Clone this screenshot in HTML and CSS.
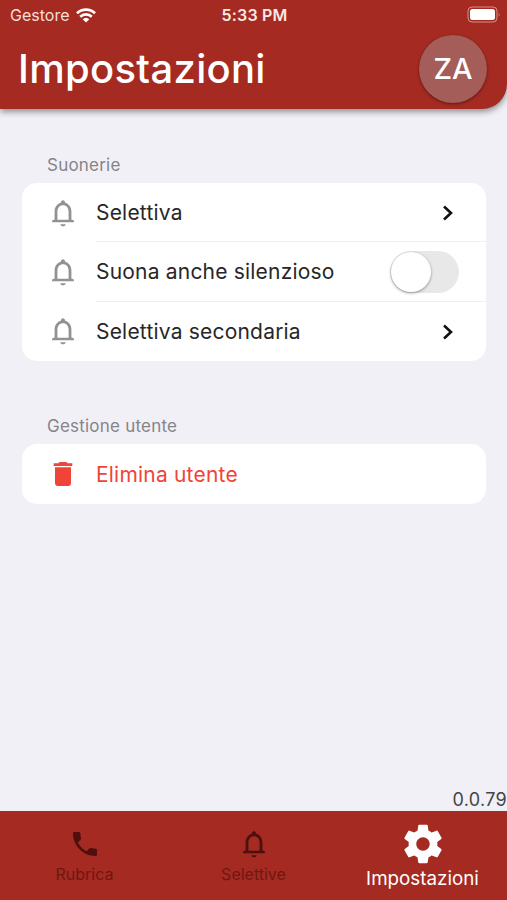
FILE: index.html
```html
<!DOCTYPE html>
<html lang="it">
<head>
<meta charset="utf-8">
<title>Impostazioni</title>
<link rel="stylesheet" href="styles.css">
</head>
<body>
<svg class="defs" width="0" height="0">
  <symbol id="bell" viewBox="0 0 24 24"><path d="M12 22c1.1 0 2-.7 2-1.6h-4c0 .9.9 1.6 2 1.6zm6.3-5.2V11c0-3.3-1.7-5.7-4.6-6.6C13.5 3.2 12.9 2.5 12 2.5s-1.5.7-1.7 1.9C7.4 5.3 5.7 7.7 5.7 11v5.8L3.8 17.7v1.3h16.4v-1.3l-1.9-.9zm-2.1.3H7.8V11c0-2.9 1.7-4.9 4.2-4.9s4.2 2 4.2 4.9v6.1z"/></symbol>
</svg>
<div class="app">
  <header class="header">
    <div class="status">
      <div class="carrier"><span>Gestore</span>
        <svg class="wifi" viewBox="0 0 20 15"><path d="M1 5.3a13 13 0 0 1 18 0M4.2 8.7a8.3 8.3 0 0 1 11.6 0" fill="none" stroke="currentColor" stroke-width="2.7"/><path d="M10 14.6 6.7 11.3a4.8 4.8 0 0 1 6.6 0z" fill="currentColor"/></svg>
      </div>
      <span class="time">5:33 PM</span>
      <svg class="battery" viewBox="0 0 34 18"><rect x="1" y="1" width="29" height="15" rx="4" fill="none" stroke="#d98f87"/><rect x="3" y="3" width="25" height="11" rx="2.5" fill="#fff"/><path d="M31.7 6.5q1.5 2 0 4z" fill="#d98f87"/></svg>
    </div>
    <div class="titlebar"><h1>Impostazioni</h1><div class="avatar">ZA</div></div>
  </header>
  <main class="main">
    <h2>Suonerie</h2>
    <section class="card">
      <div class="row"><svg class="icon"><use href="#bell"/></svg><div class="cell"><span>Selettiva</span><svg class="chevron" viewBox="0 0 12 18"><path d="m2 2.5 7 6.5-7 6.5"/></svg></div></div>
      <div class="row"><svg class="icon"><use href="#bell"/></svg><div class="cell"><span>Suona anche silenzioso</span><div class="switch"><div class="knob"></div></div></div></div>
      <div class="row"><svg class="icon"><use href="#bell"/></svg><div class="cell"><span>Selettiva secondaria</span><svg class="chevron" viewBox="0 0 12 18"><path d="m2 2.5 7 6.5-7 6.5"/></svg></div></div>
    </section>
    <h2 class="second">Gestione utente</h2>
    <section class="card">
      <div class="row danger"><svg class="icon" viewBox="0 0 24 24"><path d="M6 19c0 1.1.9 2 2 2h8c1.1 0 2-.9 2-2V7H6v12zM19 4h-3.5l-1-1h-5l-1 1H5v2h14V4z"/></svg><div class="cell"><span>Elimina utente</span></div></div>
    </section>
    <div class="version">0.0.79</div>
  </main>
  <nav class="tabs">
    <div class="tab"><svg class="tabicon" viewBox="0 0 24 24"><path d="M6.62 10.79c1.44 2.83 3.76 5.14 6.59 6.59l2.2-2.2c.27-.27.67-.36 1.02-.24 1.12.37 2.33.57 3.57.57.55 0 1 .45 1 1V20c0 .55-.45 1-1 1-9.39 0-17-7.61-17-17 0-.55.45-1 1-1h3.5c.55 0 1 .45 1 1 0 1.25.2 2.45.57 3.57.11.35.03.74-.25 1.02l-2.2 2.2z"/></svg><span>Rubrica</span></div>
    <div class="tab"><svg class="tabicon"><use href="#bell"/></svg><span>Selettive</span></div>
    <div class="tab active"><svg class="tabicon" viewBox="0 0 24 24"><path d="M19.43 12.98c.04-.32.07-.64.07-.98s-.03-.66-.07-.98l2.11-1.65c.19-.15.24-.42.12-.64l-2-3.46c-.12-.22-.39-.3-.61-.22l-2.49 1c-.52-.4-1.08-.73-1.69-.98l-.38-2.65C14.46 2.18 14.25 2 14 2h-4c-.25 0-.46.18-.49.42l-.38 2.65c-.61.25-1.17.59-1.69.98l-2.49-1c-.23-.09-.49 0-.61.22l-2 3.46c-.13.22-.07.49.12.64l2.11 1.65c-.04.32-.07.65-.07.98s.03.66.07.98l-2.11 1.65c-.19.15-.24.42-.12.64l2 3.46c.12.22.39.3.61.22l2.49-1c.52.4 1.08.73 1.69.98l.38 2.65c.03.24.24.42.49.42h4c.25 0 .46-.18.49-.42l.38-2.65c.61-.25 1.17-.59 1.69-.98l2.49 1c.23.09.49 0 .61-.22l2-3.46c.12-.22.07-.49-.12-.64l-2.11-1.65zM12 15.5c-1.93 0-3.5-1.57-3.5-3.5s1.57-3.5 3.5-3.5 3.5 1.57 3.5 3.5-1.57 3.5-3.5 3.5z"/></svg><span>Impostazioni</span></div>
  </nav>
</div>
</body>
</html>
```
FILE: styles.css
```css
* { box-sizing: border-box; }
body { margin: 0; font-family: Inter, "Liberation Sans", sans-serif; background: #f1f0f6; }
.defs { display: block; }
.app { height: 900px; display: flex; flex-direction: column; overflow: hidden; }
svg { fill: currentColor; flex: none; }
.header { height: 108.5px; flex: none; background: #a52a21; color: #fff; border-bottom-right-radius: 25px; box-shadow: 0 3px 6px rgba(0,0,0,.4); }
.status { height: 30px; padding: 0 6px 0 10px; display: grid; grid-template-columns: 1fr auto 1fr; align-items: center; font-size: 16px; }
.carrier { display: flex; align-items: center; gap: 7px; color: #f7dedb; }
.wifi { width: 20px; height: 15px; color: #fff; }
.time { font-weight: 600; font-size: 16px; letter-spacing: .2px; margin-right: 2px; color: #fbe8e5; }
.battery { width: 34px; height: 18px; justify-self: end; }
.titlebar { height: 77px; padding: 0 20px 0 18px; display: flex; align-items: center; justify-content: space-between; }
h1 { margin: 0; font-size: 40px; font-weight: 500; line-height: 48px; letter-spacing: .3px; }
.avatar { width: 68px; height: 68px; border-radius: 50%; background: #a45d58; box-shadow: 0 1px 3px rgba(0,0,0,.45); display: flex; align-items: center; justify-content: center; font-size: 29px; font-weight: 500; }
.main { flex: 1; display: flex; flex-direction: column; padding: 45.5px 21px 0 22px; }
h2 { margin: 0 0 7px 25px; font-size: 17px; line-height: 22px; font-weight: 400; letter-spacing: .22px; color: #858489; }
h2.second { margin-top: 54.4px; }
.card { background: #fff; border-radius: 15px; overflow: hidden; }
.row { height: 59.3px; display: flex; align-items: center; padding-left: 25px; color: #929292; }
.icon { width: 32px; height: 32px; margin-right: 17px; }
.cell { flex: 1; height: 100%; display: flex; align-items: center; justify-content: space-between; padding: 1px 27px 0 0; font-size: 21px; letter-spacing: .2px; color: #272727; }
.row:not(:last-child) .cell { border-bottom: 1px solid #f0f0f2; }
.danger, .danger .cell { color: #f04438; }
.chevron { width: 12px; height: 18px; margin-right: 5px; }
.chevron path { fill: none; stroke: #111; stroke-width: 2.6; }
.switch { width: 69px; height: 42px; border-radius: 21px; background: #e8e8e8; padding: 1px; }
.knob { width: 40px; height: 40px; border-radius: 50%; background: #fff; box-shadow: 0 1px 3px rgba(0,0,0,.4); }
.version { margin: auto -21px 0 0; text-align: right; font-size: 18px; line-height: 22px; letter-spacing: .3px; color: #444; }
.tabs { height: 89px; flex: none; display: grid; grid-template-columns: repeat(3, 1fr); background: #a52a21; }
.tab { display: flex; flex-direction: column; align-items: center; padding-top: 17px; font-size: 16px; line-height: 20px; color: #701713; }
.tabicon { width: 32px; height: 32px; margin-bottom: 4px; color: #4e100e; }
.active { color: #fff; padding-top: 10px; font-size: 18.8px; line-height: 24px; }
.active .tabicon { width: 46px; height: 46px; margin-bottom: 0; color: #fff; }
```
